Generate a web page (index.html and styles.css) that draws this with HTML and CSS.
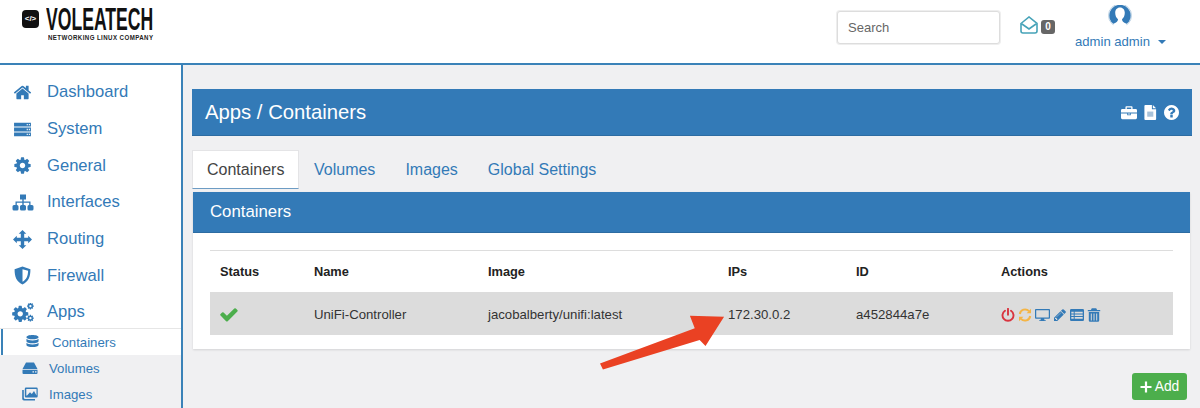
FILE: index.html
```html
<!DOCTYPE html>
<html lang="en">
<head>
<meta charset="utf-8">
<title>Apps / Containers</title>
<link rel="stylesheet" href="styles.css">
</head>
<body>
<div class="page">
  <header class="topbar">
    <div class="logo">
      <span class="logo-mark">&lt;/&gt;</span>
      <div class="logo-words">
        <div class="logo-name">VOLEATECH</div>
        <div class="logo-tag">NETWORKING LINUX COMPANY</div>
      </div>
    </div>
    <div class="top-right">
      <input class="search" type="text" placeholder="Search">
      <div class="mail">
        <svg class="mail-ic" viewBox="0 0 18 18"><path d="M1 7.500 9 1l8 6.500v7.500a2 2 0 0 1-2 2H3a2 2 0 0 1-2-2z M2 8l7 5 7-5" fill="none" stroke="#46a3b8" stroke-width="1.600"/></svg>
        <span class="badge">0</span>
      </div>
      <div class="user">
        <svg class="avatar" viewBox="0 0 24 21"><circle cx="12" cy="10.500" r="11.500" fill="none" stroke="#a9c5dc" stroke-width=".8"/><circle cx="12" cy="10.500" r="10.700" fill="#337ab7"/><path d="M12 2.500c-3 0-4.800 2.300-4.800 5.300 0 3 1.200 5.200 2.800 6.500 0 2-1.200 3.200-4.500 4.500V23h13v-4.200c-3.300-1.300-4.500-2.500-4.500-4.500 1.600-1.300 2.800-3.500 2.800-6.500 0-3-1.800-5.300-4.800-5.300z" fill="#fff"/></svg>
        <div class="user-name">admin admin <span class="caret"></span></div>
      </div>
    </div>
  </header>
  <div class="shell">
    <nav class="sidebar">
      <a class="nav-item"><svg class="nav-ic" viewBox="0 0 1792 1792"><path d="M1472 992v480q0 26-19 45t-45 19h-384v-384h-256v384h-384q-26 0-45-19t-19-45v-480q0-1 .5-3t.5-3l575-474 575 474q1 2 1 6zm223-69l-62 74q-8 9-21 11h-3q-13 0-21-7l-692-577-692 577q-12 8-24 7-13-2-21-11l-62-74q-8-10-7-23.500t11-21.500l719-599q32-26 76-26t76 26l244 204v-195q0-14 9-23t23-9h192q14 0 23 9t9 23v408l219 182q10 8 11 21.500t-7 23.500z"/></svg>Dashboard</a>
      <a class="nav-item"><svg class="nav-ic" viewBox="0 0 18 18"><path fill-rule="evenodd" d="M1 2.500h16v3.600H1zM1 7.200h16v3.600H1zM1 11.900h16v3.600H1zM13 3.700h1v1.200h-1zM15 3.700h1v1.200h-1zM13 8.400h1v1.200h-1zM15 8.400h1v1.200h-1zM13 13.100h1v1.200h-1zM15 13.100h1v1.200h-1z"/></svg>System</a>
      <a class="nav-item"><svg class="nav-ic" viewBox="0 0 1792 1792"><path id="gear" d="M1152 896q0-106-75-181t-181-75-181 75-75 181 75 181 181 75 181-75 75-181zm512-109v222q0 12-8 23t-20 13l-185 28q-19 54-39 91 35 50 107 138 10 12 10 25t-9 23q-27 37-99 108t-94 71q-12 0-26-9l-138-108q-44 23-91 38-16 136-29 186-7 28-36 28h-222q-14 0-24.500-8.500t-11.500-21.500l-28-184q-49-16-90-37l-141 107q-10 9-25 9-14 0-25-11-126-114-165-168-7-10-7-23 0-12 8-23 15-21 51-66.500t54-70.500q-27-50-41-99l-183-27q-13-2-21-12.500t-8-23.500v-222q0-12 8-23t19-13l186-28q14-46 39-92-40-57-107-138-10-12-10-24 0-10 9-23 26-36 98.500-107.500t94.500-71.500q13 0 26 10l138 107q44-23 91-38 16-136 29-186 7-28 36-28h222q14 0 24.500 8.500t11.500 21.500l28 184q49 16 90 37l142-107q9-9 24-9 13 0 25 10 129 119 165 170 7 8 7 22 0 12-8 23-15 21-51 66.500t-54 70.500q26 50 41 98l183 28q13 2 21 12.500t8 23.500z"/></svg>General</a>
      <a class="nav-item"><svg class="nav-ic wide" viewBox="0 0 22 18"><path d="M8 1h6v5H11.700v2H18.500v3.500H20a1.500 1.500 0 0 1 1.500 1.500v2.500A1.500 1.500 0 0 1 20 17h-3a1.500 1.500 0 0 1-1.500-1.500V13a1.500 1.500 0 0 1 1.500-1.500h.2V9.300H11.700v2.200H12.500A1.500 1.500 0 0 1 14 13v2.500A1.500 1.500 0 0 1 12.500 17h-3A1.500 1.500 0 0 1 8 15.500V13a1.500 1.500 0 0 1 1.500-1.500h.8V9.300H4.800v2.200H5A1.500 1.500 0 0 1 6.500 13v2.500A1.500 1.500 0 0 1 5 17H2A1.500 1.500 0 0 1 .5 15.500V13A1.500 1.500 0 0 1 2 11.500h1.500V8h6.800V6H8z"/></svg>Interfaces</a>
      <a class="nav-item"><svg class="nav-ic" viewBox="0 0 18 18"><path d="M9 0l3.600 3.600h-2v3.800h3.800v-2L18 9l-3.600 3.600v-2h-3.800v3.800h2L9 18l-3.600-3.600h2v-3.800H3.600v2L0 9l3.600-3.600v2h3.800V3.600h-2z"/></svg>Routing</a>
      <a class="nav-item"><svg class="nav-ic" viewBox="0 0 18 18"><path fill-rule="evenodd" d="M9 .5 16.500 3c0 7-1.500 11.500-7.500 14.500C3 14.500 1.500 10 1.500 3zM9 3v12c3.800-2.200 5.100-5.500 5.300-10.500z"/></svg>Firewall</a>
      <a class="nav-item"><svg class="nav-ic wide" viewBox="0 0 2100 1792"><use href="#gear" transform="translate(-110 130) scale(1)"/><use href="#gear" transform="translate(1380 -90) scale(.42)"/><use href="#gear" transform="translate(1380 1060) scale(.42)"/></svg>Apps</a>
      <div class="subnav">
        <a class="sub-item active"><svg class="sub-ic" viewBox="0 0 14 16"><path d="M7 1c3.500 0 6.500 1 6.500 2.300S10.500 5.600 7 5.600.5 4.600.5 3.300 3.500 1 7 1zM.5 5c1 1 3.500 1.800 6.500 1.800S12.500 6 13.500 5v2.600c0 1.300-3 2.300-6.500 2.300S.5 8.900.5 7.600zM.5 9.300c1 1 3.500 1.800 6.500 1.800s5.500-.8 6.500-1.800v2.400c0 1.300-3 2.300-6.500 2.300s-6.500-1-6.500-2.300z"/></svg>Containers</a>
        <a class="sub-item"><svg class="sub-ic vol" viewBox="0 0 16 14"><path fill-rule="evenodd" d="M4 1.500h8l3.500 6.500H.5zM.5 8.800h15V12a1 1 0 0 1-1 1h-13a1 1 0 0 1-1-1zM10.500 10.200v1.300h1.500v-1.300zM13 10.200v1.300h1.500v-1.300z"/></svg>Volumes</a>
        <a class="sub-item"><svg class="sub-ic vol" viewBox="0 0 16 14"><path fill-rule="evenodd" d="M4 .5h10.500a1.200 1.200 0 0 1 1.200 1.200v7.600a1.200 1.200 0 0 1-1.200 1.200H4a1.200 1.200 0 0 1-1.200-1.200V1.700A1.200 1.200 0 0 1 4 .5zM4.300 2v6.500h.7l3-3.200 1.800 1.700 2.200-3 2.500 4.500h0V2zM1.800 3v7.500a1.500 1.500 0 0 0 1.500 1.500H13v1.500H2a1.800 1.800 0 0 1-1.800-1.800V3z"/></svg>Images</a>
      </div>
    </nav>
    <main class="content">
      <div class="title-bar">
        <h1 class="title">Apps / Containers</h1>
        <div class="title-icons">
          <svg class="title-ic" viewBox="0 0 18 16"><path d="M6 1h6a1 1 0 0 1 1 1v2h3.500A1.500 1.500 0 0 1 18 5.500V8H0V5.500A1.500 1.500 0 0 1 1.500 4H5V2a1 1 0 0 1 1-1zm.5 1.500V4h5V2.500zM0 9h7v2h4V9h7v5a1.500 1.500 0 0 1-1.500 1.500h-15A1.500 1.500 0 0 1 0 14zM8 9h2v1.200H8z"/></svg>
          <svg class="title-ic doc" viewBox="0 0 13 16"><path d="M1 0h7v4.500h4.500V15a1 1 0 0 1-1 1H1a1 1 0 0 1-1-1V1a1 1 0 0 1 1-1zM9 0l3.500 3.500H9z"/><rect class="doc-block" x="3" y="7" width="6.500" height="5.500"/></svg>
          <svg class="title-ic help" viewBox="128 128 1536 1536"><path d="M1024 1376v-192q0-14-9-23t-23-9h-192q-14 0-23 9t-9 23v192q0 14 9 23t23 9h192q14 0 23-9t9-23zm256-672q0-88-55.500-163t-138.500-116-170-41q-243 0-371 213-15 24 8 42l132 100q7 6 19 6 16 0 25-12 53-68 86-92 34-24 86-24 48 0 85.500 26t37.500 59q0 38-20 61t-68 45q-63 28-115.500 86.500t-52.500 125.500v36q0 14 9 23t23 9h192q14 0 23-9t9-23q0-19 21.500-49.500t54.500-49.500q32-18 49-28.500t46-35 44.500-48 28-60.500 12.500-81zm384 192q0 209-103 385.500t-279.500 279.500-385.500 103-385.500-103-279.500-279.500-103-385.500 103-385.500 279.500-279.500 385.500-103 385.500 103 279.500 279.500 103 385.500z"/></svg>
        </div>
      </div>
      <div class="tabs">
        <a class="tab active">Containers</a>
        <a class="tab">Volumes</a>
        <a class="tab">Images</a>
        <a class="tab">Global Settings</a>
      </div>
      <section class="panel">
        <h2 class="panel-head">Containers</h2>
        <div class="panel-body">
          <table class="grid">
            <thead>
              <tr><th class="c-status">Status</th><th class="c-name">Name</th><th class="c-image">Image</th><th class="c-ips">IPs</th><th class="c-id">ID</th><th>Actions</th></tr>
            </thead>
            <tbody>
              <tr>
                <td><svg class="check" viewBox="100 250 1600 1300"><path d="M1671 566q0 40-28 68l-724 724-136 136q-28 28-68 28t-68-28l-136-136-362-362q-28-28-28-68t28-68l136-136q28-28 68-28t68 28l294 295 656-657q28-28 68-28t68 28l136 136q28 28 28 68z"/></svg></td>
                <td>UniFi-Controller</td>
                <td>jacobalberty/unifi:latest</td>
                <td>172.30.0.2</td>
                <td>a452844a7e</td>
                <td>
                  <div class="actions">
                    <svg class="act red" viewBox="0 0 14 14"><path d="M4 2.700a5.500 5.500 0 1 0 6 0M7 .8v6" fill="none" stroke="currentColor" stroke-width="1.900" stroke-linecap="round"/></svg>
                    <svg class="act amber" viewBox="0 0 14 14"><path d="M1.800 6A5.300 5.300 0 0 1 11 3.200M12.200 8A5.300 5.300 0 0 1 3 10.800" fill="none" stroke="currentColor" stroke-width="2"/><path d="M13 .8v4.400H8.600zM1 13.200V8.800h4.400z" fill="currentColor"/></svg>
                    <svg class="act blue mon" viewBox="0 0 16 14"><path fill-rule="evenodd" d="M1 .5h14a1 1 0 0 1 1 1v8.500a1 1 0 0 1-1 1H9.700l.5 1.500h1.300v1H4.500v-1h1.300l.5-1.500H1a1 1 0 0 1-1-1V1.500a1 1 0 0 1 1-1zM1.300 1.800v7.900h13.400V1.800z"/></svg>
                    <svg class="act blue" viewBox="0 0 1792 1792"><path d="M491 1536l91-91-235-235-91 91v107h128v128h107zm523-928q0-22-22-22-10 0-17 7l-542 542q-7 7-7 17 0 22 22 22 10 0 17-7l542-542q7-7 7-17zm-54-192l416 416-832 832h-416v-416zm683 96q0 53-37 90l-166 166-416-416 166-165q36-38 90-38 53 0 91 38l235 234q37 39 37 91z"/></svg>
                    <svg class="act blue" viewBox="0 0 14 14"><path fill-rule="evenodd" d="M1.200 1h11.600A1.200 1.200 0 0 1 14 2.200v9.600a1.200 1.200 0 0 1-1.200 1.200H1.200A1.200 1.200 0 0 1 0 11.800V2.200A1.200 1.200 0 0 1 1.200 1zM1.300 3.800v1.700h2.400V3.800zM4.700 3.800v1.700h8V3.800zM1.300 6.400v1.700h2.400V6.400zM4.700 6.400v1.700h8V6.400zM1.300 9v1.800h2.400V9zM4.700 9v1.800h8V9z"/></svg>
                    <svg class="act blue" viewBox="0 0 14 14"><path fill-rule="evenodd" d="M4.800.3h4.400l.9 1.700h3.100v1.200H.8V2h3.100zM1.800 4h10.400v8.500a1.300 1.300 0 0 1-1.300 1.300H3.100a1.300 1.300 0 0 1-1.300-1.300zM3.800 5.500v7h1v-7zM6.500 5.500v7h1v-7zM9.200 5.500v7h1v-7z"/></svg>
                  </div>
                </td>
              </tr>
            </tbody>
          </table>
        </div>
      </section>
      <div class="footer-row">
        <button class="add"><svg class="plus" viewBox="0 0 12 12"><path d="M6 .5v11M.5 6h11" stroke="#fff" stroke-width="2.200" fill="none"/></svg>Add</button>
      </div>
      <svg class="arrow" viewBox="0 0 130 60"><path d="M0 50 L3 56 L102 26 L108 32 L127 2 L92 1 L97 14 Z" fill="#ea4123"/></svg>
    </main>
  </div>
</div>
</body>
</html>
```
FILE: styles.css
```css
* { box-sizing: border-box; }
html, body { margin: 0; padding: 0; }
body {
  font-family: "Liberation Sans", Arial, sans-serif;
  color: #333;
  background: #f0f0f2;
}
.page {
  width: 1200px;
  height: 408px;
  overflow: hidden;
  display: flex;
  flex-direction: column;
}

/* top bar */
.topbar {
  height: 65px;
  flex: none;
  display: flex;
  background: #fff;
  border-bottom: 2px solid #3a82b8;
}
.logo {
  display: flex;
  padding: 7px 0 0 22px;
  align-items: flex-start;
}
.logo-mark {
  width: 17px;
  height: 18px;
  margin: 3px 7px 0 0;
  border-radius: 4px;
  background: #111;
  color: #fff;
  font-size: 8px;
  font-weight: bold;
  line-height: 18px;
  text-align: center;
}
.logo-words { width: 108px; }
.logo-name {
  font-weight: bold;
  font-size: 32px;
  line-height: 25px;
  height: 25px;
  color: #111;
  white-space: nowrap;
  transform-origin: left top;
  transform: scaleX(.55);
}
.logo-tag {
  font-weight: bold;
  font-size: 8px;
  line-height: 9px;
  margin: 1px 0 0 2px;
  color: #222;
  letter-spacing: .55px;
  white-space: nowrap;
  transform-origin: left top;
  transform: scaleX(.767);
}
.top-right {
  margin-left: auto;
  display: flex;
  align-items: flex-start;
}
.search {
  width: 163px;
  height: 33px;
  margin: 11px 20px 0 0;
  padding: 0 10px;
  border: 1px solid #ddd;
  border-radius: 3px;
  box-shadow: 0 0 0 1px #eee;
  font: 13px "Liberation Sans", sans-serif;
  color: #555;
}
.search::placeholder { color: #666; opacity: 1; }
.mail {
  display: flex;
  align-items: flex-end;
  gap: 3px;
  width: 55px;
  margin-top: 16px;
}
.mail-ic { width: 18px; height: 18px; }
.badge {
  width: 14px;
  height: 14px;
  border-radius: 3px;
  background: #666;
  color: #fff;
  font-size: 10px;
  font-weight: bold;
  line-height: 14px;
  text-align: center;
}
.user {
  width: 125px;
  display: flex;
  flex-direction: column;
  margin-top: 5px;
}
.avatar { width: 24px; height: 21px; margin-left: 33px; overflow: hidden; }
.user-name {
  margin-top: 8px;
  font-size: 13.100px;
  line-height: 16px;
  color: #337ab7;
  white-space: nowrap;
}
.caret {
  display: inline-block;
  width: 0;
  height: 0;
  margin-left: 4px;
  vertical-align: 2px;
  border-left: 4px solid transparent;
  border-right: 4px solid transparent;
  border-top: 4px solid #337ab7;
}

/* shell */
.shell {
  flex: 1;
  display: flex;
  min-height: 0;
}

/* sidebar */
.sidebar {
  width: 183px;
  flex: none;
  padding-top: 8.900px;
  background: #fff;
  border-right: 2px solid #3a82b8;
}
.nav-item {
  display: flex;
  align-items: center;
  height: 36.700px;
  padding-left: 47px;
  position: relative;
  font-size: 16.600px;
  color: #337ab7;
}
.nav-ic {
  position: absolute;
  left: 13px;
  top: 9px;
  width: 19px;
  height: 19px;
  fill: #337ab7;
}
.nav-ic.wide { left: 12px; width: 22px; }
.subnav {
  margin-top: -2.300px;
  border-top: 1px solid #e6e6e6;
  background: #f0f0f2;
  height: 90px;
}
.sub-item {
  display: flex;
  align-items: center;
  height: 26px;
  padding-left: 49px;
  font-size: 13.200px;
  color: #337ab7;
  position: relative;
}
.sub-item.active {
  padding-left: 52px;
  background: #fff;
  box-shadow: inset 1px 0 0 #fff, inset 3px 0 0 #3a82b8;
}
.sub-ic {
  position: absolute;
  left: 26px;
  top: 5px;
  width: 13px;
  height: 15px;
  fill: #337ab7;
}
.sub-ic.vol { left: 22px; width: 16px; height: 14px; top: 6px; }

/* content */
.content {
  flex: 1;
  padding: 24px 8px 0 9px;
  position: relative;
  min-width: 0;
}
.title-bar {
  height: 47px;
  display: flex;
  align-items: center;
  justify-content: space-between;
  padding: 0 13px 0 13px;
  background: #337ab7;
  border-bottom: 1px solid #2d6ca2;
}
.title {
  margin: 0;
  font-size: 20.300px;
  font-weight: normal;
  color: #fff;
}
.title-icons { display: flex; align-items: center; gap: 7px; }
.title-ic { width: 16px; height: 15px; fill: #fff; }
.title-ic.doc { width: 13px; }
.title-ic.help { width: 15px; height: 15px; }
.doc-block { fill: #a9c3da; }
.tabs {
  display: flex;
  margin-top: 14px;
  height: 39px;
}
.tab {
  padding: 0 15px;
  line-height: 39px;
  font-size: 16px;
  color: #337ab7;
}
.tab.active {
  width: 107px;
  padding: 0 14px;
  line-height: 37px;
  color: #444;
  background: #fff;
  border: 1px solid #e4e4e6;
  border-bottom: 1px solid #6d9cc4;
}
.panel {
  margin: 3px 2px 0 1px;
  height: 157px;
  background: #fff;
  box-shadow: 0 1px 2px rgba(0,0,0,.12);
}
.panel-head {
  margin: 0;
  height: 41px;
  padding: 0 17px;
  font-size: 16.800px;
  font-weight: normal;
  line-height: 40px;
  color: #fff;
  background: #337ab7;
  border-bottom: 1px solid #2d6ca2;
}
.panel-body { padding: 17px 17px 0; }
.grid {
  width: 963px;
  border-collapse: collapse;
  table-layout: fixed;
  font-size: 13.200px;
  color: #333;
  border-top: 1px solid #ddd;
}
.grid th {
  height: 41px;
  padding: 0 10px;
  text-align: left;
  font-size: 12.800px;
  font-weight: bold;
  color: #222;
}
.grid td {
  height: 43px;
  padding: 3px 10px 0;
  background: #dcdcdc;
}
.c-status { width: 94px; }
.c-name { width: 174px; }
.c-image { width: 240px; }
.c-ips { width: 128px; }
.c-id { width: 145px; }
.check { width: 18px; height: 15px; fill: #4cae4c; display: block; }
.actions { display: flex; align-items: center; gap: 3px; }
.act { width: 14px; height: 14px; fill: currentColor; flex: none; }
.act.mon { width: 15px; }
.red { color: #d9343f; }
.amber { color: #f5b545; }
.blue { color: #337ab7; }
.footer-row {
  display: flex;
  justify-content: flex-end;
  margin-top: 24px;
  padding-right: 5px;
}
.add {
  width: 55px;
  height: 27px;
  padding: 0;
  display: flex;
  align-items: center;
  justify-content: center;
  gap: 3px;
  border: 0;
  border-radius: 3px;
  background: #4cae4c;
  color: #fff;
  font: 13.800px "Liberation Sans", sans-serif;
}
.plus { width: 12px; height: 12px; }
.arrow {
  position: absolute;
  left: 417px;
  top: 249px;
  width: 127px;
  height: 60px;
}
```
